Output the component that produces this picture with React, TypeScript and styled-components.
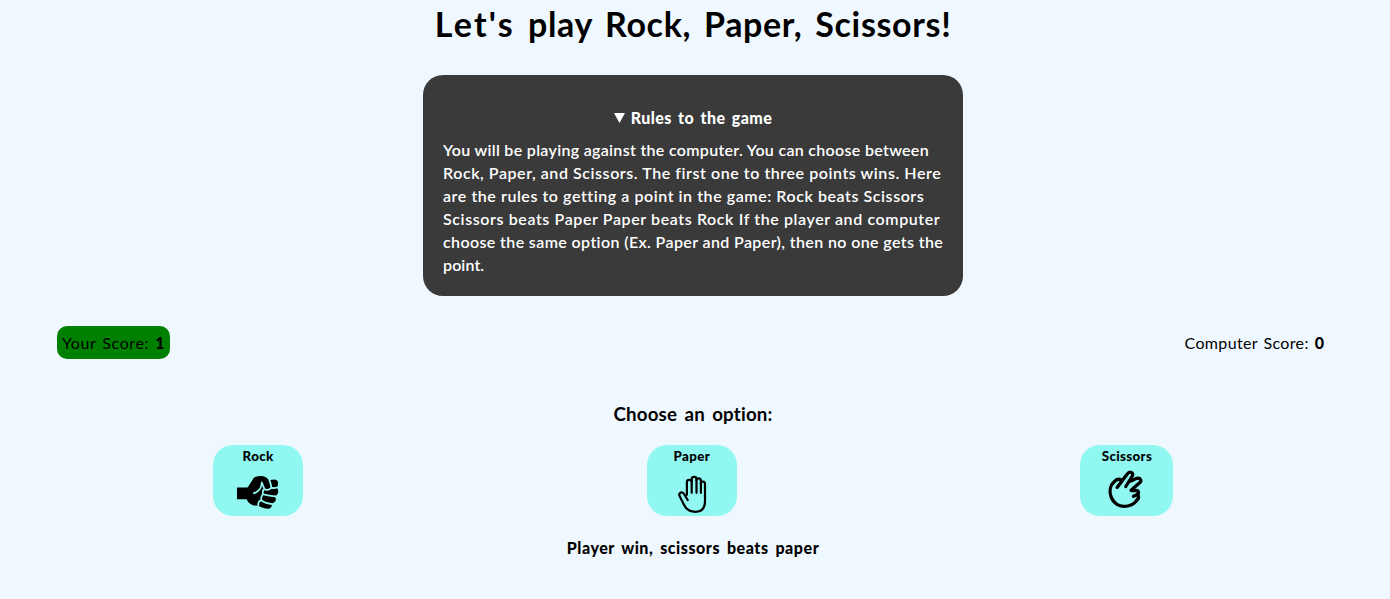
import React from 'react';
import styled, { createGlobalStyle } from 'styled-components';
import { GiRock } from 'react-icons/gi';

const GlobalStyle = createGlobalStyle`
  * { box-sizing: border-box; }
  body {
    margin: 0;
    background: #f0f8ff;
    color: #000;
    font-family: "Comic Sans MS", Lato, "Open Sans", sans-serif;
    font-size: 16px;
    line-height: 23px;
  }
`;

const Page = styled.main`
  width: 1386px;
  height: 599px;
  overflow: hidden;
  display: flex;
  flex-direction: column;
  align-items: center;
`;

const Title = styled.h1`
  margin: 0 0 27px;
  padding-top: 1px;
  height: 48px;
  font-size: 34px;
  line-height: 46px;
  font-weight: 700;
  letter-spacing: 0.65px;
  word-spacing: 4px;
  white-space: nowrap;
`;

const TitleLead = styled.span`
  letter-spacing: 2.25px;
`;

const RulesPanel = styled.section`
  width: 540px;
  height: 221px;
  padding: 31px 20px 20px;
  border-radius: 20px;
  background: #3a3a3a;
  color: #fff;
`;

const RulesHeading = styled.div`
  display: flex;
  justify-content: center;
  align-items: center;
  gap: 6px;
  margin-bottom: 9px;
  font-weight: 900;
  letter-spacing: 0.45px;
  word-spacing: 2px;
`;

const Marker = styled.svg`
  width: 11px;
  height: 10px;
  fill: currentColor;
`;

const RulesText = styled.p`
  margin: 0;
  font-weight: 600;
`;

const RulesLine = styled.span<{ $spacing: number }>`
  display: block;
  white-space: nowrap;
  letter-spacing: ${({ $spacing }) => $spacing}px;
`;

const ScoreBar = styled.div`
  align-self: stretch;
  display: flex;
  justify-content: space-between;
  margin: 30px 57px 0;
`;

const Score = styled.div<{ $leading?: boolean; $spacing: number }>`
  height: 33px;
  padding: 5px;
  border-radius: 10px;
  background: ${({ $leading }) => ($leading ? '#008000' : 'transparent')};
  letter-spacing: ${({ $spacing }) => $spacing}px;
  word-spacing: 1.5px;
  white-space: nowrap;
`;

const Points = styled.b`
  font-weight: 900;
  letter-spacing: 0;
`;

const Prompt = styled.h3`
  margin: 42px 0 0;
  font-size: 18.72px;
  line-height: 26px;
  font-weight: 700;
  letter-spacing: 0.2px;
  word-spacing: 2.5px;
`;

const Options = styled.div`
  align-self: stretch;
  display: flex;
  justify-content: space-around;
  margin: 18px 40.7px 0 41.3px;
`;

const OptionButton = styled.button<{ $width: number }>`
  display: flex;
  flex-direction: column;
  align-items: center;
  width: ${({ $width }) => $width}px;
  height: 71px;
  padding: 1px 0 0;
  border: 0;
  border-radius: 20px;
  background: #90f8f0;
  color: #000;
  font-family: inherit;
  font-size: 13.333px;
  line-height: 20px;
  font-weight: 900;
  letter-spacing: 0.35px;
`;

const FistIcon = styled(GiRock)`
  width: 50px;
  height: 50px;
  margin-top: -1px;
`;

const HandIcon = styled.svg`
  width: 42px;
  height: 46px;
  margin-top: 3px;
  flex: none;
  fill: none;
  stroke: currentColor;
  stroke-linecap: round;
  stroke-linejoin: round;
`;

const Result = styled.p`
  margin: 20px 0 0;
  font-weight: 900;
  letter-spacing: 0.55px;
  word-spacing: 2.5px;
`;

const rules = [
  { text: 'You will be playing against the computer. You can choose between', spacing: 0.31 },
  { text: 'Rock, Paper, and Scissors. The first one to three points wins. Here', spacing: 0.56 },
  { text: 'are the rules to getting a point in the game: Rock beats Scissors', spacing: 0.56 },
  { text: 'Scissors beats Paper Paper beats Rock If the player and computer', spacing: 0.6 },
  { text: 'choose the same option (Ex. Paper and Paper), then no one gets the', spacing: 0.38 },
  { text: 'point.', spacing: 0.1 },
];

function PaperHand() {
  return (
    <HandIcon viewBox="-0.7 -0.8 42 46" strokeWidth="2.2">
      <path d="M15.2 25V12.2C15.2 9.4 20 9.4 20 12.2V23" />
      <path d="M20 12V9.4C20 6.3 24.8 6.3 24.8 9.4V23" />
      <path d="M24.8 10.5C24.8 7.8 29.2 7.8 29.2 11V23" />
      <path d="M29.2 14C29.2 10.8 33.3 11.2 33.3 14V31.5C33.3 38.5 29.5 42 23.6 42C17 42 14 38.8 12 34.5L8 26.5C6.3 23 10.2 21.2 12.2 24L16 30.2" />
    </HandIcon>
  );
}

function ScissorsHand() {
  return (
    <HandIcon viewBox="1.7 3 42 46" strokeWidth="3.3">
      <path d="M12.8 21.5L17.3 15.5C16.5 12.5 12.5 12.5 10.2 15.5C5.5 19.5 4.8 26 7 31.5C10 38 16 41.5 23.5 40C28.5 39 31.5 36.5 33.8 32.5" />
      <path d="M17.3 15.5L23 8C25.5 4.5 29.8 6.8 28 10L21.5 20.5" />
      <path d="M26.5 15L32.5 12.3C36.5 11.5 37.8 15.2 35 17L26.8 24.2" />
      <path d="M27 24.5H31.5C34.7 24.5 35 28 32.5 28.8L29.2 30.3" />
      <path d="M33 28.8C35 30 34.7 32 32.7 33.8" />
    </HandIcon>
  );
}

export default function App() {
  return (
    <>
      <GlobalStyle />
      <Page>
        <Title><TitleLead>Let's</TitleLead> play Rock, Paper, Scissors!</Title>
        <RulesPanel>
          <RulesHeading>
            <Marker viewBox="0 0 11 10"><path d="M0 0H11L5.5 10Z" /></Marker>
            Rules to the game
          </RulesHeading>
          <RulesText>
            {rules.map(({ text, spacing }) => (
              <RulesLine key={text} $spacing={spacing}>{text}</RulesLine>
            ))}
          </RulesText>
        </RulesPanel>
        <ScoreBar>
          <Score $leading $spacing={0.6}>Your Score: <Points>1</Points></Score>
          <Score $spacing={0.35}>Computer Score: <Points>0</Points></Score>
        </ScoreBar>
        <Prompt>Choose an option:</Prompt>
        <Options>
          <OptionButton $width={90}>Rock<FistIcon /></OptionButton>
          <OptionButton $width={90}>Paper<PaperHand /></OptionButton>
          <OptionButton $width={93}>Scissors<ScissorsHand /></OptionButton>
        </Options>
        <Result>Player win, scissors beats paper</Result>
      </Page>
    </>
  );
}
